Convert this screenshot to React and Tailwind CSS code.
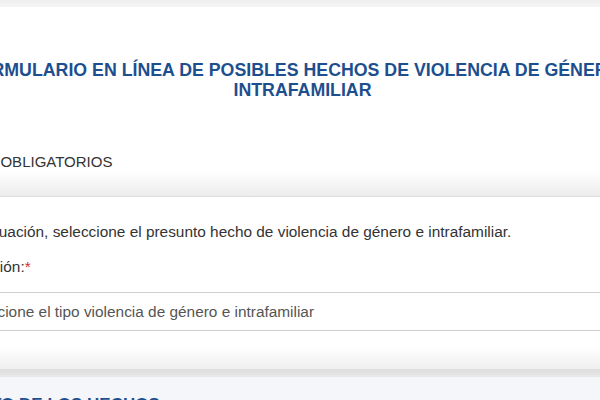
export default function App() {
  return (
    <div className="relative h-[400px] w-[600px] overflow-hidden bg-white font-['Liberation_Sans',Arial,sans-serif] text-[#333]">
      <div className="h-[7px] bg-[linear-gradient(to_bottom,#efefef,#f4f4f4)]" />

      <div className="-ml-[70px] w-[740px]">
        <h1 className="pl-[5px] pt-[53px] text-center text-[17.75px] font-bold leading-[20px] text-[#1d4f8f]">
          FORMULARIO EN LÍNEA DE POSIBLES HECHOS DE VIOLENCIA DE GÉNERO E
          <br />
          INTRAFAMILIAR
        </h1>

        <section className="mt-[40px]">
          <div className="border-b border-[#dcdcdc] bg-[linear-gradient(to_bottom,#fff_55%,#ececec)] px-[16px] pb-[24px] pt-[12px]">
            <h2 className="text-[15px] leading-[20px] text-[#333]">
              DATOS OBLIGATORIOS
            </h2>
          </div>

          <div className="bg-[linear-gradient(to_bottom,#fff_87%,#efefef)] px-[14px] pb-[38px] pt-[25px] text-[15.4px]">
            <p className="leading-[20px]">
              A continuación, seleccione el presunto hecho de violencia de
              género e intrafamiliar.
            </p>
            <label className="mt-[15px] block leading-[20px]">
              Tipificación:<span className="text-[#d9302c]">*</span>
            </label>
            <div className="-ml-px mt-[15px] flex h-[39px] items-center border border-[#cfcfcf] px-[15px] text-[#555]">
              Seleccione el tipo violencia de género e intrafamiliar
            </div>
          </div>

          <div className="h-[8px] bg-[linear-gradient(to_bottom,#dcdcdc,#e9e9e9)]" />
        </section>

        <section className="bg-[#f5f6fa] px-[16px] pb-[15px] pt-[18px]">
          <h2 className="text-[17px] font-bold leading-[20px] text-[#1d4f8f]">
            RELATO DE LOS HECHOS
          </h2>
        </section>
      </div>
    </div>
  );
}
